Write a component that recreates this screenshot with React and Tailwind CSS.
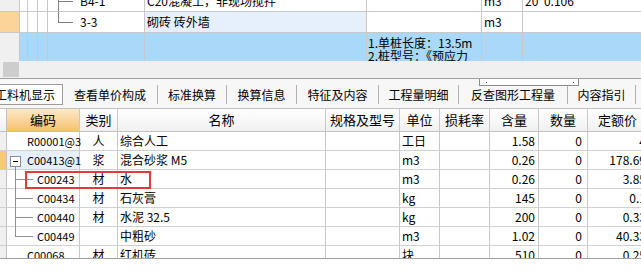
import React from "react";

const font = { fontFamily: '"Noto Sans CJK SC", "Liberation Sans", sans-serif' };

const tabs = [
  { label: "工料机显示", w: "w-[63px]", active: true },
  { label: "查看单价构成", w: "w-[95px]" },
  { label: "标准换算", w: "w-[69px]" },
  { label: "换算信息", w: "w-[70px]" },
  { label: "特征及内容", w: "w-[82px]" },
  { label: "工程量明细", w: "w-[80px]" },
  { label: "反查图形工程量", w: "w-[109px]" },
  { label: "内容指引", w: "w-[68px]" },
];

const cols = [
  { key: "code", label: "编码", w: "w-[73px]" },
  { key: "type", label: "类别", w: "w-[38px]" },
  { key: "name", label: "名称", w: "w-[208px]" },
  { key: "spec", label: "规格及型号", w: "w-[74px]" },
  { key: "unit", label: "单位", w: "w-[40px]" },
  { key: "loss", label: "损耗率", w: "w-[50px]" },
  { key: "qty", label: "含量", w: "w-[49px]" },
  { key: "num", label: "数量", w: "w-[49px]" },
  { key: "price", label: "定额价", w: "w-[60px]" },
];

const rows = [
  { code: "R00001@3", type: "人", name: "综合人工", unit: "工日", qty: "1.58", num: "0", price: "4" },
  { code: "C00413@1", type: "浆", name: "混合砂浆 M5", unit: "m3", qty: "0.26", num: "0", price: "178.69", parent: true },
  { code: "C00243", type: "材", name: "水", unit: "m3", qty: "0.26", num: "0", price: "3.85", child: true },
  { code: "C00434", type: "材", name: "石灰膏", unit: "kg", qty: "145", num: "0", price: "0.1", child: true },
  { code: "C00440", type: "材", name: "水泥 32.5", unit: "kg", qty: "200", num: "0", price: "0.33", child: true },
  { code: "C00449", type: "", name: "中粗砂", unit: "m3", qty: "1.02", num: "0", price: "40.33", child: true, last: true },
  { code: "C00068", type: "材", name: "红机砖", unit: "块", qty: "510", num: "0", price: "0.25" },
];

const Scrollbar = () => (
  <div className="h-[17px] bg-[#f0f0f0] flex items-center pl-[3px]">
    <div className="w-[16px] h-[15px] bg-[#cdcdcd]" />
  </div>
);

const TopCells = ({ children, nameBg = "", tree }) => (
  <>
    <div className="w-[8px] border-r border-[#c8c8c8] h-full" />
    <div className="w-[10px] border-r border-[#c8c8c8] h-full" />
    <div className="w-[10px] border-r border-[#c8c8c8] h-full" />
    <div className="relative w-[97px] border-r border-[#c8c8c8] h-full">{tree}</div>
    <div className={`w-[222px] border-r border-[#c8c8c8] h-full ${nameBg}`}>{children[0]}</div>
    <div className="w-[115px] border-r border-[#c8c8c8] h-full">{children[1]}</div>
    <div className="w-[41px] border-r border-[#c8c8c8] h-full">{children[2]}</div>
    <div className="flex-1 h-full">{children[3]}</div>
  </>
);

export default function App() {
  return (
    <div className="w-[641px] h-[280px] overflow-hidden bg-white text-[12px] text-black" style={font}>
      {/* upper grid */}
      <div className="h-[61px] overflow-hidden">
        <div className="-mt-[9px]">
          <div className="flex h-[21px] border-b border-[#c8c8c8]">
            <div className="w-[20px] bg-[#f0f0f0] border-r border-[#c8c8c8]" />
            <TopCells
              tree={
                <>
                  <div className="absolute left-[10px] top-0 bottom-0 border-l border-[#808080]" />
                  <div className="absolute left-[10px] top-[10px] w-[15px] border-t border-[#808080]" />
                  <span className="absolute left-[32px] top-[3px] leading-[14px]">B4-1</span>
                </>
              }
            >
              <span className="block pl-[2px] pt-[3px] leading-[14px]">C20混凝土，非现场搅拌</span>
              <span />
              <span className="block pl-[2px] pt-[3px] leading-[14px]">m3</span>
              <span className="block pl-[2px] pt-[3px] leading-[14px]">20*0.106</span>
            </TopCells>
          </div>
          <div className="flex h-[21px] border-b border-[#c8c8c8]">
            <div className="w-[20px] bg-[#fcd49a] border-r border-[#c8c8c8]" />
            <TopCells
              nameBg="bg-[#e6f0fc]"
              tree={
                <>
                  <div className="absolute left-[10px] top-0 h-[10px] border-l border-[#808080]" />
                  <div className="absolute left-[10px] top-[10px] w-[15px] border-t border-[#808080]" />
                  <span className="absolute left-[32px] top-[3px] leading-[14px]">3-3</span>
                </>
              }
            >
              <span className="block pl-[2px] pt-[3px] leading-[14px]">砌砖 砖外墙</span>
              <span />
              <span className="block pl-[2px] pt-[3px] leading-[14px]">m3</span>
              <span />
            </TopCells>
          </div>
          <div className="flex h-[40px]">
            <div className="w-[20px] bg-[#f0f0f0] border-r border-[#c8c8c8]" />
            <div className="flex flex-1 bg-[#a9d8f8]">
              <TopCells>
                <span />
                <div className="pl-[1px] pt-[3px] leading-[13px] whitespace-nowrap">
                  <div>1.单桩长度：13.5m</div>
                  <div>2.桩型号：《预应力</div>
                </div>
                <span />
                <span />
              </TopCells>
            </div>
          </div>
        </div>
      </div>
      <Scrollbar />
      <div className="border-t border-[#a0a0a0]" />

      {/* tab strip */}
      <div className="relative h-[29px] bg-[#f7f7f7] flex items-center">
        <div className="absolute left-[479px] top-0 w-[100px] h-[7px] border border-[#8c8c8c] bg-white border-t-0">
          <div className="absolute left-[6px] top-[3px] w-[1px] h-[1px] bg-[#555]" />
          <div className="absolute right-[4px] top-[3px] w-[1px] h-[1px] bg-[#555]" />
        </div>
        {tabs.map((t) =>
          t.active ? (
            <div
              key={t.label}
              className={`${t.w} shrink-0 h-[21px] mt-[2px] overflow-hidden bg-white border border-l-0 border-[#9c9c9c] text-[12px] leading-[19px]`}
            >
              <span className="block -ml-[5px] whitespace-nowrap">{t.label}</span>
            </div>
          ) : (
            <div
              key={t.label}
              className={`${t.w} shrink-0 h-[19px] mt-[2px] flex items-center justify-center border-r border-[#b0b0b0] text-[12px]`}
            >
              {t.label}
            </div>
          )
        )}
      </div>

      {/* lower grid */}
      <div className="relative h-[150px] overflow-hidden border-t border-[#c0c0c0]">
        <div className="flex h-[23px] border-b border-[#c0c0c0] bg-gradient-to-b from-[#ffffff] to-[#f1f1f1]">
          <div className="w-[7px] shrink-0 border-r border-[#c0c0c0]" />
          {cols.map((c) => (
            <div
              key={c.key}
              className={`${c.w} shrink-0 border-r border-[#c8c8c8] flex items-center justify-center text-[13px] ${
                c.key === "code" ? "bg-gradient-to-b from-[#fde9c6] to-[#f6c16e]" : ""
              }`}
            >
              {c.label}
            </div>
          ))}
        </div>

        {rows.map((r) => (
          <div key={r.code} className="flex h-[19px] border-b border-[#d0d0d0]">
            <div className={`w-[7px] shrink-0 border-r border-[#c0c0c0] ${r.parent ? "bg-[#f8c97c]" : "bg-[#f0f0f0]"}`} />
            <div className={`relative w-[73px] shrink-0 border-r border-[#c8c8c8] ${r.parent ? "bg-[#e6f0fc]" : ""}`}>
              {r.parent && (
                <>
                  <div className="absolute left-[3px] top-[5px] w-[11px] h-[11px] border border-[#8c8c8c] bg-white flex items-center justify-center">
                    <div className="w-[5px] h-[1px] bg-black" />
                  </div>
                  <div className="absolute left-[8px] top-[16px] bottom-[-1px] border-l border-[#909090]" />
                </>
              )}
              {r.child && (
                <>
                  <div className={`absolute left-[8px] top-[-1px] border-l border-[#909090] ${r.last ? "h-[10px]" : "bottom-[-1px]"}`} />
                  <div className="absolute left-[8px] top-[9px] w-[18px] border-t border-[#909090]" />
                </>
              )}
              <span className={`absolute top-[2px] text-[11px] leading-[15px] ${r.child ? "left-[30px]" : "left-[20px]"}`}>{r.code}</span>
            </div>
            <div className="w-[38px] shrink-0 border-r border-[#c8c8c8] flex items-center justify-center">{r.type}</div>
            <div className="w-[208px] shrink-0 border-r border-[#c8c8c8] pl-[2px] leading-[18px]">{r.name}</div>
            <div className="w-[74px] shrink-0 border-r border-[#c8c8c8]" />
            <div className="w-[40px] shrink-0 border-r border-[#c8c8c8] pl-[2px] leading-[18px]">{r.unit}</div>
            <div className="w-[50px] shrink-0 border-r border-[#c8c8c8]" />
            <div className="w-[49px] shrink-0 border-r border-[#c8c8c8] text-right pr-[3px] leading-[18px]">{r.qty}</div>
            <div className="w-[49px] shrink-0 border-r border-[#c8c8c8] text-right pr-[5px] leading-[18px]">{r.num}</div>
            <div className="w-[60px] shrink-0 text-right pr-[2px] leading-[18px]">{r.price}</div>
          </div>
        ))}

        <div className="absolute left-[25px] top-[62px] w-[126px] h-[18px] border-2 border-[#e03a3a]" />
        <div className="absolute left-0 right-0 top-[149px]">
          <Scrollbar />
        </div>
      </div>
      <div className="border-t border-[#a0a0a0]" />
    </div>
  );
}
